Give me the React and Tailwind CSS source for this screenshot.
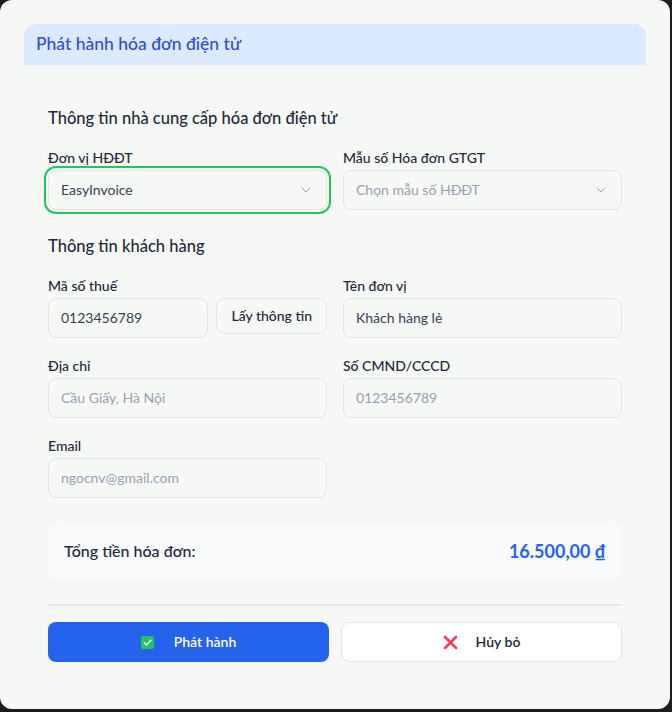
import React from 'react'
import { ChevronDown } from 'lucide-react'

const font = { fontFamily: 'Lato, "Noto Sans", sans-serif' }

const Field = ({ label, children }) => (
  <div>
    <div className="text-sm font-medium leading-5 text-gray-800 mb-0.5">{label}</div>
    {children}
  </div>
)

const Input = ({ value, muted }) => (
  <div
    className={`h-10 flex items-center px-3 rounded-lg border border-[#e3e6e4] bg-[#f6f8f6] text-sm ${
      muted ? 'text-gray-400' : 'text-gray-700'
    }`}
  >
    {value}
  </div>
)

const Select = ({ value, muted, focused }) => (
  <div
    className={`h-10 flex items-center justify-between px-3 rounded-lg border border-[#e3e6e4] bg-[#f6f8f6] text-sm ${
      muted ? 'text-gray-400' : 'text-gray-700'
    } ${focused ? 'ring-2 ring-[#22c55e] ring-offset-2 ring-offset-[#f6f8f6]' : ''}`}
  >
    <span>{value}</span>
    <ChevronDown className="w-4 h-4 text-gray-400" strokeWidth={1.5} />
  </div>
)

export default function App() {
  return (
    <div className="min-h-screen bg-[#1c1c1c]" style={font}>
      <div className="w-[670px] h-[709px] bg-[#f6f8f6] rounded-[12px] overflow-hidden pt-6">
        {/* Header */}
        <div className="mx-6 h-[41px] rounded-t-xl bg-[#dbeafe] flex items-center px-3">
          <h1 className="text-[17.5px] font-medium text-[#2f4fd6]">Phát hành hóa đơn điện tử</h1>
        </div>

        <div className="px-12 pt-[41px]">
          {/* Provider */}
          <h2 className="text-[16.5px] leading-6 font-medium text-gray-800 mb-[18px]">
            Thông tin nhà cung cấp hóa đơn điện tử
          </h2>
          <div className="grid grid-cols-2 gap-4">
            <Field label="Đơn vị HĐĐT">
              <Select value="EasyInvoice" focused />
            </Field>
            <Field label="Mẫu số Hóa đơn GTGT">
              <Select value="Chọn mẫu số HĐĐT" muted />
            </Field>
          </div>

          {/* Customer */}
          <h2 className="mt-6 text-[16.5px] leading-6 font-medium text-gray-800 mb-[18px]">
            Thông tin khách hàng
          </h2>
          <div className="grid grid-cols-2 gap-x-4 gap-y-[18px]">
            <Field label="Mã số thuế">
              <div className="flex gap-2 items-start">
                <div className="flex-1">
                  <Input value="0123456789" />
                </div>
                <button className="h-9 px-[14px] rounded-lg border border-[#e3e6e4] bg-[#f6f8f6] text-sm font-medium text-gray-800">
                  Lấy thông tin
                </button>
              </div>
            </Field>
            <Field label="Tên đơn vị">
              <Input value="Khách hàng lẻ" />
            </Field>
            <Field label="Địa chỉ">
              <Input value="Cầu Giấy, Hà Nội" muted />
            </Field>
            <Field label="Số CMND/CCCD">
              <Input value="0123456789" muted />
            </Field>
            <Field label="Email">
              <Input value="ngocnv@gmail.com" muted />
            </Field>
          </div>

          {/* Total */}
          <div className="mt-6 h-[58px] rounded-xl bg-[#f8fafc] px-4 flex items-center justify-between">
            <span className="text-base font-medium text-gray-800">Tổng tiền hóa đơn:</span>
            <span className="text-lg font-bold text-[#2563eb]">16.500,00 ₫</span>
          </div>

          <div className="mt-6 h-[2px] bg-[#e5e7eb]" />

          {/* Actions */}
          <div className="mt-4 grid grid-cols-2 gap-3">
            <button className="h-10 rounded-lg bg-[#2563eb] flex items-center justify-center gap-5 text-sm font-semibold text-white">
              <svg width="13" height="13" viewBox="0 0 13 13">
                <rect width="13" height="13" rx="2" fill="#22c55e" />
                <path d="M3.3 6.8 L5.5 9 L9.8 4.3" fill="none" stroke="white" strokeWidth="1.6" strokeLinecap="round" strokeLinejoin="round" />
              </svg>
              Phát hành
            </button>
            <button className="h-10 rounded-lg bg-white border border-[#e3e6e4] flex items-center justify-center gap-[18px] text-sm font-semibold text-gray-800">
              <svg width="15" height="15" viewBox="0 0 15 15">
                <path d="M2 2 L13 13 M13 2 L2 13" stroke="#f43f5e" strokeWidth="2.6" strokeLinecap="round" />
              </svg>
              Hủy bỏ
            </button>
          </div>
        </div>
      </div>
    </div>
  )
}
